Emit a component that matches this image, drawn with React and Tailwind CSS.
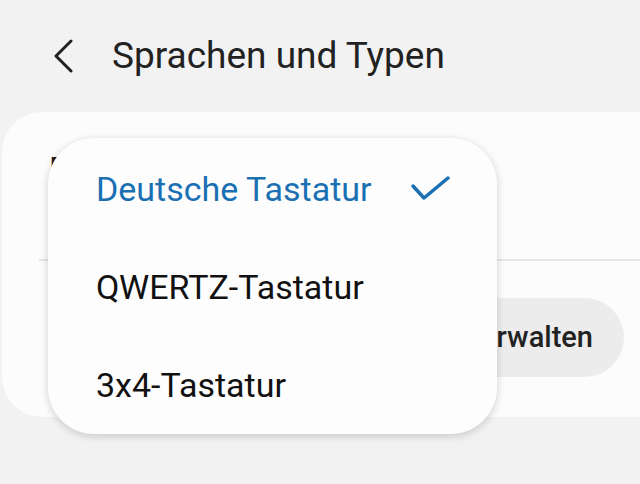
import React from 'react';

const items = [
  { label: 'Deutsche Tastatur', selected: true },
  { label: 'QWERTZ-Tastatur' },
  { label: '3x4-Tastatur' },
];

function Chevron() {
  return (
    <svg width="22" height="34" viewBox="0 0 22 34" fill="none">
      <path d="M19 2 L4 17 L19 32" stroke="#222" strokeWidth="3" strokeLinecap="round" strokeLinejoin="round" />
    </svg>
  );
}

function Check() {
  return (
    <svg width="40" height="26" viewBox="0 0 40 26" fill="none">
      <path d="M2 10 L13 22 L37 2" stroke="#1a70b3" strokeWidth="3.5" strokeLinecap="round" strokeLinejoin="round" />
    </svg>
  );
}

export default function App() {
  return (
    <div className="relative w-[640px] h-[484px] overflow-hidden bg-[#f2f2f2] font-['Roboto',sans-serif]">
      {/* Header */}
      <div className="flex items-center h-[112px] pl-[52px] pb-[1px]">
        <Chevron />
        <h1 className="ml-[38px] text-[37px] leading-none text-[#222]">Sprachen und Typen</h1>
      </div>

      {/* Settings card */}
      <div className="ml-[2px] w-[700px] h-[305px] rounded-[40px] bg-[#fcfcfc] flex flex-col">
        <div className="h-[147px] pl-[47px] pt-[41px]">
          <div className="text-[33px] text-[#222] leading-none">Deutsch</div>
          <div className="mt-[10px] text-[22px] text-[#777] leading-none">Standard</div>
        </div>
        <div className="ml-[37px] h-[2px] bg-[#e6e6e6]" />
        <div className="flex justify-end pr-[78px] pt-[37px]">
          <div className="h-[79px] rounded-full bg-[#ececec] flex items-center pl-[34px] pr-[31px] text-[29px] font-medium text-[#222]">
            Tastaturen verwalten
          </div>
        </div>
      </div>

      {/* Dropdown popup */}
      <div className="absolute left-[48px] top-[138px] w-[449px] h-[296px] rounded-[46px] bg-[#fdfdfd] shadow-[0_2px_8px_rgba(0,0,0,0.18)] flex flex-col pt-[2px]">
        {items.map((it) => (
          <div key={it.label} className="h-[99px] flex items-center pl-[48px] pr-[46px]">
            <span className={'text-[34px] leading-none ' + (it.selected ? 'text-[#1a70b3]' : 'text-[#111]')}>
              {it.label}
            </span>
            {it.selected && (
              <span className="ml-auto">
                <Check />
              </span>
            )}
          </div>
        ))}
      </div>
    </div>
  );
}
